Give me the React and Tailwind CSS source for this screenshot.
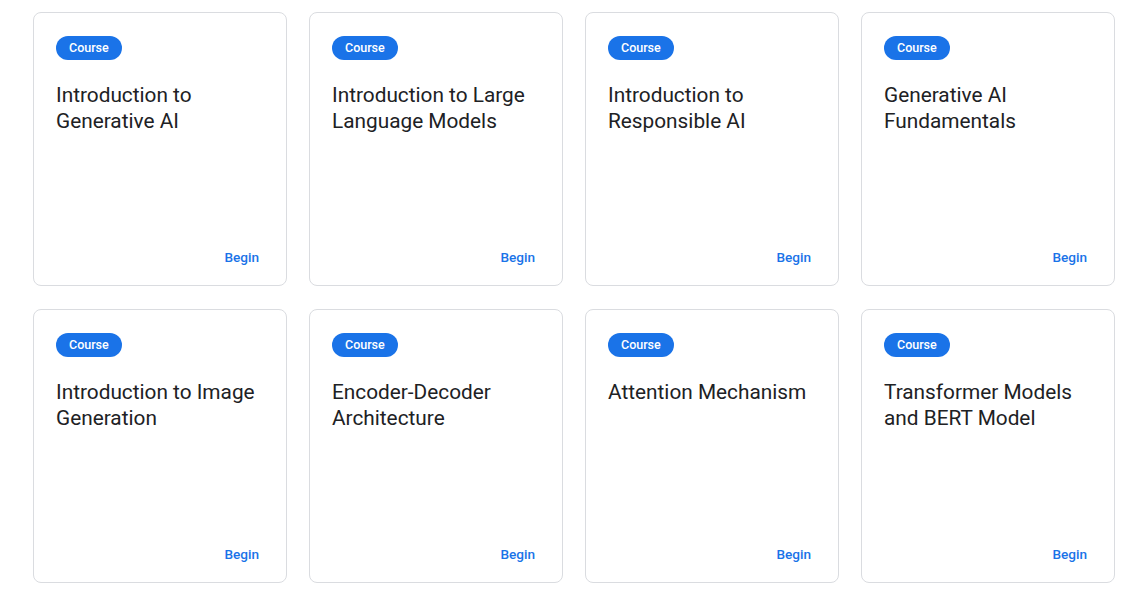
import React from "react";

const courses = [
  "Introduction to Generative AI",
  "Introduction to Large Language Models",
  "Introduction to Responsible AI",
  "Generative AI Fundamentals",
  "Introduction to Image Generation",
  "Encoder-Decoder Architecture",
  "Attention Mechanism",
  "Transformer Models and BERT Model",
];

const CourseCard = ({ title }) => (
  <div className="flex h-[274px] flex-col rounded-lg border border-[#dadce0] bg-white px-[22px] pt-[22px] pb-[18px]">
    <div>
      <span className="inline-flex h-[24px] items-center rounded-full bg-[#1a73e8] px-[13px] text-[12.5px] font-medium text-white">
        Course
      </span>
    </div>
    <h3 className="mt-[22px] pr-2 text-[20.8px] leading-[26px] font-normal text-[#202124]">
      {title}
    </h3>
    <div className="mt-auto flex justify-end pr-[5px]">
      <a href="#" className="text-[13.6px] font-medium text-[#1a73e8]">
        Begin
      </a>
    </div>
  </div>
);

export default function App() {
  return (
    <div className="min-h-screen bg-white pl-[33px] pt-[12px] font-['Roboto',sans-serif]">
      <div className="grid w-[1082px] grid-cols-4 gap-x-[22px] gap-y-[23px]">
        {courses.map((c) => (
          <CourseCard key={c} title={c} />
        ))}
      </div>
    </div>
  );
}
